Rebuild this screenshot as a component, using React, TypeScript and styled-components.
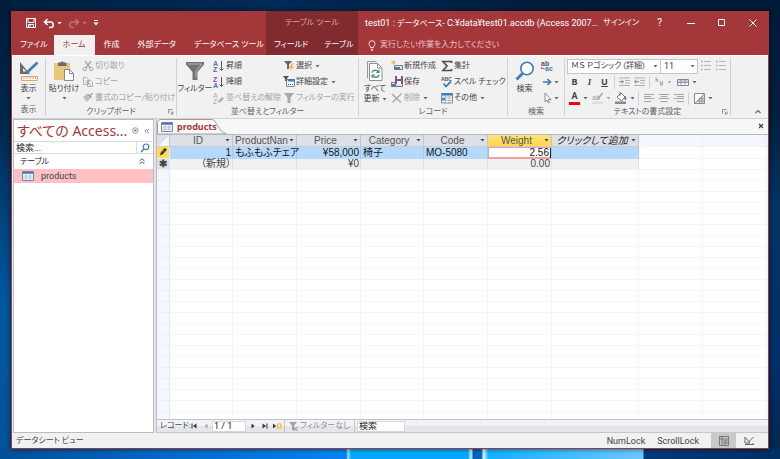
import React, { useState } from "react";
import styled, { createGlobalStyle, css } from "styled-components";

const c = {
  red: "#a4373a",
  redDark: "#812b2e",
  ribbon: "#f1f1f1",
  line: "#d2d2d2",
  text: "#444444",
  muted: "#a3a3a3",
  blue: "#3e7db8",
};

const GlobalStyle = createGlobalStyle`
  *, *::before, *::after { box-sizing: border-box; }
  body {
    margin: 0;
    font-family: Roboto, "Noto Sans CJK JP", sans-serif;
    font-feature-settings: "palt";
    font-size: 8px;
    line-height: 12px;
    color: ${c.text};
  }
  button, input, select {
    font: inherit;
    font-feature-settings: inherit;
    color: inherit;
    margin: 0;
    padding: 0;
    border: 0;
    border-radius: 0;
    background: none;
    outline: none;
  }
`;

const Desktop = styled.div`
  height: 100vh;
  min-height: 300px;
  padding: 11px 11px 10px;
  display: flex;
  background:
    linear-gradient(90deg, #004f97 0, #0069c4 20%, #0085f0 44.400%, #9deaff 44.600%, #00a8fb 45%, #00aaff 60%, #c9f5ff 60.400%, #0064bd 60.700%, #0064bd 61.700%, #dcfaff 62%, #12b2ff 62.600%, #6ac9fb 82.400%, #003b78 82.600%, #002f62 100%) bottom / 100% 11px no-repeat,
    linear-gradient(180deg, #001a38 0, #00203f 25%, #003566 45%, #00306a 80%, #00274f 100%) right / 12px 100% no-repeat,
    linear-gradient(180deg, #001c3c 0, #00284f 28%, #003a6d 40%, #00579f 65%, #00549b 100%) left / 12px 100% no-repeat,
    linear-gradient(90deg, #00203f 0, #002a57 35%, #001b38 75%);
`;

const Window = styled.main`
  flex: 1;
  min-width: 0;
  display: flex;
  flex-direction: column;
  border: 1px solid ${c.red};
  border-top: 0;
  background: ${c.ribbon};
  box-shadow: 0 0 5px rgba(0, 0, 0, 0.6);
`;

/* ---------- header ---------- */

const Header = styled.header`
  display: grid;
  grid-template-columns: 254px 92px minmax(0, 1fr);
  grid-template-rows: 24px 20px;
  background: ${c.red};
  color: #fff;
`;

const QuickAccess = styled.div`
  display: flex;
  align-items: center;
  padding-left: 13px;
  gap: 6px;
`;

const QuickButton = styled.button<{ $dim?: boolean }>`
  display: flex;
  align-items: center;
  gap: 2px;
  opacity: ${(p) => (p.$dim ? 0.3 : 1)};
`;

const ContextTitle = styled.div`
  display: flex;
  align-items: center;
  justify-content: center;
  background: ${c.redDark};
  color: #d9a9aa;
`;

const TitleBar = styled.div`
  display: flex;
  align-items: center;
  padding-left: 7px;
`;

const Title = styled.h1`
  margin: 0;
  flex: 1;
  font-size: 9px;
  font-weight: 400;
  white-space: nowrap;
`;

const TitleNoun = styled.span`
  font-size: 8px;
`;

const SignIn = styled.button`
  padding-right: 5px;
  white-space: nowrap;
`;

const WindowButton = styled.button`
  width: 31px;
  height: 22px;
  display: flex;
  align-items: center;
  justify-content: center;
  font-size: 10px;
`;

const Tab = styled.button<{ $active?: boolean }>`
  height: 20px;
  padding: 0 9px;
  white-space: nowrap;
  ${(p) => p.$active && css`background: ${c.ribbon}; color: ${c.red};`}
`;

const TabRow = styled.nav`
  display: flex;
  ${Tab}:first-child { padding: 0 6px 0 8px; }
`;

const ContextTabRow = styled.nav`
  display: flex;
  justify-content: space-between;
  background: ${c.redDark};
  ${Tab} { padding: 0 8px; }
`;

const TellMe = styled.button`
  display: flex;
  align-items: center;
  gap: 4px;
  padding-left: 10px;
  color: #e9c6c7;
`;

/* ---------- ribbon ---------- */

const Ribbon = styled.section`
  display: flex;
  height: 64px;
  flex: none;
  padding-top: 2px;
  border-top: 1px solid #fff;
  border-bottom: 1px solid ${c.line};
`;

const Group = styled.section<{ $width: number }>`
  width: ${(p) => p.$width}px;
  flex: none;
  display: flex;
  flex-direction: column;
  border-right: 1px solid ${c.line};
  margin-bottom: 2px;
`;

const GroupBody = styled.div`
  height: 48px;
  display: flex;
`;

const GroupLabel = styled.h2`
  margin: 0;
  font-size: 8px;
  font-weight: 400;
  line-height: 12px;
  display: grid;
  grid-template-columns: 8px 1fr 8px;
  align-items: center;
  text-align: center;
  white-space: nowrap;
  color: #5f5f5f;
`;

const BigButton = styled.button<{ $width: number }>`
  width: ${(p) => p.$width}px;
  flex: none;
  display: flex;
  flex-direction: column;
  align-items: center;
  line-height: 10px;
  white-space: nowrap;
`;

const BigIcon = styled.span`
  height: 26px;
  display: flex;
  align-items: center;
`;

const BigText = styled.span`
  display: flex;
  align-items: center;
  gap: 2px;
  height: 10px;
`;

const BigCaret = styled.span`
  height: 8px;
  display: flex;
  align-items: center;
`;

const Column = styled.div<{ $width?: number }>`
  width: ${(p) => (p.$width ? `${p.$width}px` : "auto")};
  flex: none;
  display: grid;
  grid-template-rows: repeat(3, 16px);
`;

const FormatColumn = styled(Column)`
  padding-left: 2px;
`;

const SmallButton = styled.button<{ $dim?: boolean }>`
  display: flex;
  align-items: center;
  gap: 1px;
  white-space: nowrap;
  color: ${(p) => (p.$dim ? c.muted : c.text)};
`;

const WithCaret = styled.span`
  display: flex;
  align-items: center;
  gap: 3px;
`;

const FormatRow = styled.div`
  display: flex;
  align-items: center;
`;

const ComboWrap = styled.label<{ $width: number }>`
  width: ${(p) => p.$width}px;
  height: 15px;
  display: flex;
  align-items: center;
  border: 1px solid #c6c6c6;
  background: #fff;
  padding-right: 2px;
  & + & { border-left: 0; }
`;

const Combo = styled.select<{ $large?: boolean }>`
  flex: 1;
  min-width: 0;
  height: 13px;
  padding-left: 3px;
  appearance: none;
  font-size: ${(p) => (p.$large ? 9 : 8)}px;
`;

const Tool = styled.button<{ $width?: number; $dim?: boolean }>`
  width: ${(p) => p.$width ?? 15}px;
  height: 15px;
  flex: none;
  display: flex;
  align-items: center;
  justify-content: center;
  gap: 3px;
  opacity: ${(p) => (p.$dim ? 0.5 : 1)};
`;

const Divider = styled.span`
  width: 1px;
  height: 13px;
  margin: 0 2px;
  background: ${c.line};
`;

const Glyph = styled.span<{ $kind: "b" | "i" | "u" }>`
  font-family: "Noto Sans", sans-serif;
  font-size: 9px;
  font-weight: 700;
  ${(p) => p.$kind === "i" && css`font-family: "Liberation Serif", serif; font-style: italic;`}
  ${(p) => p.$kind === "u" && css`text-decoration: underline;`}
`;

const Swatch = styled.span`
  width: 11px;
  height: 13px;
  line-height: 9px;
  font-size: 9px;
  font-weight: 700;
  text-align: center;
  border-bottom: 3px solid #f00;
`;

const Collapse = styled.button`
  margin-left: auto;
  align-self: flex-end;
  width: 20px;
  height: 13px;
`;

/* ---------- body ---------- */

const Workspace = styled.div`
  flex: 1;
  min-height: 0;
  display: flex;
  padding-left: 1px;
`;

const NavPane = styled.aside`
  width: 141px;
  flex: none;
  border: 1px solid #b9bcc2;
  background: #fff;
`;

const NavTitle = styled.h2`
  margin: 0;
  height: 21px;
  padding: 0 3px;
  display: flex;
  align-items: center;
  gap: 5px;
  font-family: "Noto Sans", "Noto Sans CJK JP", sans-serif;
  font-size: 14px;
  line-height: 20px;
  font-weight: 400;
  color: ${c.red};
  white-space: nowrap;
`;

const NavTitleText = styled.span`
  flex: 1;
`;

const SearchBox = styled.label`
  height: 13px;
  display: flex;
  align-items: center;
  border-top: 1px solid #d9dbe0;
  border-bottom: 1px solid #d9dbe0;
`;

const SearchInput = styled.input`
  flex: 1;
  min-width: 0;
  height: 11px;
  padding-left: 2px;
  font-size: 9px;
  border-right: 1px solid #d9dbe0;
  &::placeholder { color: #222; opacity: 1; }
`;

const SearchIcon = styled.span`
  width: 16px;
  display: flex;
  justify-content: center;
`;

const NavGroup = styled.button`
  width: 100%;
  height: 15px;
  padding: 0 8px 0 6px;
  display: flex;
  align-items: center;
  justify-content: space-between;
  color: #222;
`;

const NavItem = styled.button`
  width: 100%;
  height: 14px;
  padding-left: 8px;
  display: flex;
  align-items: center;
  gap: 7px;
  background: #ffc1c4;
  font-size: 9px;
`;

const Splitter = styled.div`
  width: 3px;
  flex: none;
  background: #e3e5e9;
  border-right: 1px solid #b9bcc2;
`;

const Document = styled.section`
  flex: 1;
  min-width: 0;
  display: flex;
  flex-direction: column;
  background: #fff;
`;

const DocTabs = styled.div`
  height: 16px;
  flex: none;
  display: flex;
  justify-content: space-between;
  background: #f7f7f8;
  border-bottom: 1px solid #b4b8bf;
`;

const DocTab = styled.button`
  display: grid;
  width: 70px;
  height: 15px;
  color: ${c.red};
  font-family: "Noto Sans", sans-serif;
  font-size: 9px;
  font-weight: 700;
  & > * { grid-area: 1 / 1; }
`;

const DocTabLabel = styled.span`
  display: flex;
  align-items: center;
  gap: 4px;
  padding-left: 4px;
  z-index: 1;
`;

const DocClose = styled.button`
  width: 15px;
`;

const Sheet = styled.div`
  flex: 1;
  min-height: 0;
  overflow: hidden;
`;

const Grid = styled.table`
  width: 100%;
  table-layout: fixed;
  border-collapse: separate;
  border-spacing: 0;
  font-family: "Liberation Sans", "Noto Sans CJK JP", sans-serif;
  font-size: 10px;
  line-height: 10px;
`;

const Col = styled.col<{ $width?: number }>`
  width: ${(p) => (p.$width ? `${p.$width}px` : "auto")};
`;

const HeadCell = styled.th<{ $active?: boolean; $blank?: boolean; $italic?: boolean }>`
  height: 12px;
  padding: 0 2px 0 1px;
  font-weight: 400;
  font-style: ${(p) => (p.$italic ? "italic" : "normal")};
  color: ${(p) => (p.$italic ? "#222" : "#555")};
  background: ${(p) => (p.$active ? "linear-gradient(#ffe27a, #ffd84c)" : p.$blank ? "#f5f7fe" : "#dde0e6")};
  border-right: 1px solid ${(p) => (p.$blank ? "#eef0f8" : "#bfc3ca")};
  border-bottom: 1px solid ${(p) => (p.$blank ? "#f0f2f8" : "#c9ccd2")};
`;

const CornerCell = styled(HeadCell)`
  background: linear-gradient(135deg, #dde0e6 55%, #f6f7f9 55%);
`;

const HeadInner = styled.span`
  display: grid;
  grid-template-columns: minmax(0, 1fr) 5px;
  align-items: center;
  white-space: nowrap;
`;

const HeadText = styled.span`
  text-align: center;
`;

const Marker = styled.th<{ $current?: boolean; $filled?: boolean }>`
  height: 11px;
  padding: 0;
  font-weight: 700;
  line-height: 10px;
  background: ${(p) => (p.$current ? "#ffdc5b" : p.$filled ? "#dde0e6" : "#f5f7fe")};
  border-right: 1px solid #e8eaf0;
  border-bottom: 1px solid #edeff6;
`;

const Cell = styled.td<{ $tone?: "sel" | "new"; $right?: boolean; $edit?: boolean }>`
  height: 11px;
  padding: ${(p) => (p.$right ? "0 1px 0 0" : "0 0 0 2px")};
  white-space: nowrap;
  color: ${(p) => (p.$tone === "sel" ? "#151515" : c.text)};
  text-align: ${(p) => (p.$right ? "right" : "left")};
  border-right: 1px solid #f4f4f4;
  border-bottom: 1px solid #f6f6f6;
  ${(p) => p.$tone === "sel" && css`background: #b4d9fd; border-color: #b4d9fd; border-right-color: #a9c9e8;`}
  ${(p) => p.$tone === "new" && css`background: #f1f1f1; border-color: #f1f1f1; border-right-color: #e3e3e3;`}
  ${(p) => p.$edit && css`background: #fff; padding: 0; box-shadow: inset 0 0 0 1px #f0a0a4; border-bottom-color: #f0a0a4;`}
`;

const EditInput = styled.input`
  display: block;
  width: 100%;
  height: 10px;
  padding-right: 1px;
  text-align: right;
  border-right: 1px solid #222;
`;

/* ---------- record navigator and status bar ---------- */

const RecordBar = styled.div`
  height: 14px;
  flex: none;
  display: flex;
  align-items: center;
  padding-left: 3px;
  border-top: 1px solid #bfc2c8;
  border-bottom: 1px solid #c4c7cc;
  background: linear-gradient(#f1f3f6 50%, #e4e6ea 50%);
`;

const RecordLabel = styled.span`
  width: 28px;
  white-space: nowrap;
`;

const RecordButton = styled.button<{ $dim?: boolean }>`
  width: 12px;
  height: 12px;
  display: flex;
  align-items: center;
  justify-content: center;
  opacity: ${(p) => (p.$dim ? 0.35 : 1)};
`;

const RecordInput = styled.input<{ $width: number }>`
  width: ${(p) => p.$width}px;
  height: 11px;
  padding-left: 1px;
  background: #fff;
  border: 1px solid #d6d8dc;
  color: #222;
  font-size: 9px;
  margin-right: 1px;
  &::placeholder { color: #222; opacity: 1; }
`;

const FilterState = styled.button`
  width: 71px;
  height: 12px;
  display: flex;
  align-items: center;
  justify-content: center;
  gap: 2px;
  margin: 0 2px 0 1px;
  border-left: 1px solid #c4c7cc;
  border-right: 1px solid #c4c7cc;
  color: #8e8e8e;
  white-space: nowrap;
`;

const StatusBar = styled.footer`
  height: 15px;
  flex: none;
  display: flex;
  align-items: center;
  padding: 0 7px 0 4px;
`;

const StatusText = styled.span`
  margin-right: auto;
`;

const KeyState = styled.span`
  margin-right: 12px;
  font-size: 9px;
`;

const ViewButton = styled.button<{ $active?: boolean }>`
  width: 25px;
  height: 15px;
  display: flex;
  align-items: center;
  justify-content: center;
  background: ${(p) => (p.$active ? "#c8c8c8" : "transparent")};
`;

/* ---------- icons ---------- */

type IconProps = { w: number; h: number; children: React.ReactNode };
const Svg = ({ w, h, children }: IconProps) => (
  <svg width={w} height={h} viewBox={`0 0 ${w} ${h}`} fill="none" aria-hidden="true">
    {children}
  </svg>
);

const Caret = ({ color = "#666" }: { color?: string }) => (
  <Svg w={5} h={3}><path d="M0.500 0h4L2.500 2.500z" fill={color} /></Svg>
);

const SaveIcon = () => (
  <Svg w={12} h={12}><path d="M1.500 1.500h9v9h-9zM3 1.500v4h6v-4M3.500 10.500V7.500h5v3M5 8v2" stroke="#fff" /></Svg>
);
const UndoIcon = () => (
  <Svg w={12} h={11}><path d="M4.500 1L1.500 4l3 3M2 4h5.500a2.800 2.800 0 0 1 0 5.600H6" stroke="#fff" strokeWidth="1.500" /></Svg>
);
const RedoIcon = () => (
  <Svg w={12} h={11}><path d="M7.500 1l3 3-3 3M10 4H4.500a2.800 2.800 0 0 0 0 5.600H6" stroke="#fff" strokeWidth="1.500" /></Svg>
);
const CustomizeIcon = () => (
  <Svg w={6} h={6}><path d="M1 .5h4" stroke="#fff" /><path d="M.5 2.500h5L3 5.500z" fill="#fff" /></Svg>
);
const BulbIcon = () => (
  <Svg w={8} h={11}><path d="M2.500 7.500C2.500 6 1 5.500 1 3.700a3 3 0 0 1 6 0C7 5.500 5.500 6 5.500 7.500zM2.700 9.200h2.600M3.200 10.400h1.600" stroke="#f3dcdc" /></Svg>
);
const DesignIcon = () => (
  <Svg w={20} h={21}>
    <path d="M1 1v12h10zM4 7l3.500 3.500H4z" fill="#6b6b6b" fillRule="evenodd" />
    <path d="M18.500 1.500L9 10.500" stroke="#3e7db8" strokeWidth="2.600" />
    <path d="M9.500 9L7 13l3.800-2z" fill="#3e7db8" />
    <path d="M2.500 15.500h16v4h-16z" fill="#fff" stroke="#e9a066" />
    <path d="M5 16v2M8 16v2M11 16v2M14 16v2M16.500 16v2" stroke="#e9a066" />
  </Svg>
);
const PasteIcon = () => (
  <Svg w={20} h={22}>
    <path d="M0 3h16v17H0z" fill="#ebc77c" />
    <path d="M4 2.500h2.500a2 2 0 0 1 3.500 0h2.500V6H4z" fill="#6b6b6b" />
    <path d="M10.500 9.500h5l4 4v7h-9z" fill="#fff" stroke="#8a8a8a" />
    <path d="M15.500 9.500v4h4" stroke="#8a8a8a" />
  </Svg>
);
const CutIcon = () => (
  <Svg w={12} h={12}><path d="M3 1l5 7M9 1L4 8" stroke="#a9a9a9" strokeWidth="1.400" /><circle cx="2.800" cy="9" r="1.700" stroke="#a9a9a9" /><circle cx="9.200" cy="9" r="1.700" stroke="#a9a9a9" /></Svg>
);
const CopyIcon = () => (
  <Svg w={12} h={12}><path d="M1.500 1.500h3l2 2v5h-5zM5.500 4.500h3l2 2v4h-5z" fill="#f5f1f5" stroke="#b3aab3" /><path d="M7 7.500h2M7 9h2M3 4.500h1.500M3 6.500h1.500" stroke="#b3aab3" strokeWidth=".7" /></Svg>
);
const BrushIcon = () => (
  <Svg w={12} h={12}><path d="M1 5l3-2.500 4 4L5 10z" fill="#bdbdbd" /><path d="M4.500 2.500L8.500 6.500 10 5 8.500 4 11 1.500 10 .7 7.500 3 6 1.500z" fill="#9e9e9e" /></Svg>
);
const LauncherIcon = () => (
  <Svg w={6} h={6}><path d="M.5 4.500v-4h4M2.500 2.500l2 2M5 2.500V5H2.500" stroke="#777" strokeWidth=".8" /></Svg>
);
const FunnelIcon = () => (
  <Svg w={20} h={20}><path d="M1 1h18v2.500L12.500 11v8h-5v-8L1 3.500z" fill="#737373" /><path d="M3 3h14L11 10v7" stroke="#c5c5c5" strokeWidth=".8" /></Svg>
);
const SortIcon = ({ top, bottom, flip }: { top: string; bottom: string; flip?: boolean }) => (
  <Svg w={12} h={12}>
    <text x="0" y="5.500" fontSize="7" fontWeight="700" fontFamily="Liberation Sans, sans-serif" fill={flip ? "#8a4aa5" : c.blue}>{top}</text>
    <text x="0" y="11.500" fontSize="7" fontWeight="700" fontFamily="Liberation Sans, sans-serif" fill={flip ? c.blue : "#8a4aa5"}>{bottom}</text>
    <path d="M8.500 1v9.500M6.500 8.500l2 2 2-2" stroke="#555" />
  </Svg>
);
const SortClearIcon = () => (
  <Svg w={12} h={12}>
    <text x="0" y="5.500" fontSize="7" fontFamily="Liberation Sans, sans-serif" fill="#aaa">A</text>
    <text x="0" y="11.500" fontSize="7" fontFamily="Liberation Sans, sans-serif" fill="#aaa">Z</text>
    <path d="M5 9l4-4 2 1.500-3.500 4H5.500z" fill="#b3b3b3" />
  </Svg>
);
const SelectionIcon = () => (
  <Svg w={12} h={12}><path d="M1 1h8L6 4.500V9H4V4.500z" fill="#666" /><path d="M9 3L6 8h2l-1.500 3.500L11 6.500H9L10.500 3z" fill="#f0b45a" /></Svg>
);
const AdvancedIcon = () => (
  <Svg w={12} h={12}><path d="M0 0h6L4 2.500V5H2V2.500z" fill="#555" /><path d="M3.500 3.500h8v7h-8z" fill="#fff" stroke="#888" /><path d="M4 3h8v2.500H5z" fill="#3e7db8" /><path d="M5 8.500h1M7 8.500h1M9 8.500h1" stroke="#555" /></Svg>
);
const ToggleFilterIcon = () => (
  <Svg w={12} h={12}><path d="M1 1h10L7.500 5.500V11h-3V5.500z" fill="#a8a8a8" /></Svg>
);
const RefreshIcon = () => (
  <Svg w={18} h={22}>
    <path d="M1.500 18V1.500h9" stroke="#999" />
    <path d="M3.500 3.500h8l4.500 4.500v12.500H3.500z" fill="#fff" stroke="#8d8d8d" />
    <path d="M11.500 3.500V8H16" stroke="#8d8d8d" />
    <path d="M6 12.500c.7-2.700 4.500-3 6-1M13 15c-.7 2.700-4.500 3-6 1" stroke="#4b9b77" strokeWidth="1.600" />
    <path d="M13.500 9v4H9.700zM5.500 18.500v-4h3.800z" fill="#4b9b77" />
  </Svg>
);
const NewRecordIcon = () => (
  <Svg w={12} h={12}><path d="M3.500 5.500h8v4h-8z" fill="#dce9f5" stroke="#777" /><path d="M4 7h5v2H4z" fill="#3e7db8" /><path d="M2.500 0v5M0 2.500h5M.8.8l3.500 3.500M4.300.8L.8 4.300" stroke="#f0b45a" strokeWidth=".8" /></Svg>
);
const SaveRecordIcon = () => (
  <Svg w={12} h={12}><path d="M.5 6.500h11v4H.5z" fill="#dce9f5" stroke="#777" /><path d="M1 8h4v2H1z" fill="#3e7db8" /><path d="M4 0h8v8H4z" fill="#8a4aa5" /><path d="M6 0h4v3H6zM6 5h4v3H6z" fill="#fff" /></Svg>
);
const DeleteIcon = () => (
  <Svg w={12} h={12}><path d="M1 2l9 8.500M10.500 1.500L1.500 10.500" stroke="#a9a9a9" strokeWidth="1.400" /></Svg>
);
const SigmaIcon = () => (
  <Svg w={12} h={12}><path d="M10.500 3V1.500H2L6 6l-4 4.500h8.500V9" stroke="#505050" strokeWidth="1.700" /></Svg>
);
const SpellIcon = () => (
  <Svg w={12} h={12}><text x="0" y="5" fontSize="5" fontWeight="700" fontFamily="Liberation Sans, sans-serif" fill="#555">ABC</text><path d="M2.500 7.500L5 10.500l5-5" stroke="#3e7db8" strokeWidth="1.800" /></Svg>
);
const MoreIcon = () => (
  <Svg w={12} h={12}><path d="M.5 1.500h11v9.500H.5z" fill="#fff" stroke="#888" /><path d="M1 1h10.500v2.500H1zM1 6h3v2H1z" fill="#3e7db8" /><path d="M.5 4h11M.5 6h11M.5 8.500h11M4.500 4v7M8 4v7" stroke="#8ba7c2" strokeWidth=".7" /></Svg>
);
const FindIcon = () => (
  <Svg w={20} h={20}><circle cx="12" cy="7.500" r="6.200" fill="#fff" stroke="#3e7db8" strokeWidth="1.600" /><path d="M7.500 12.500L1.500 18.500" stroke="#3e7db8" strokeWidth="2.800" /></Svg>
);
const ReplaceIcon = () => (
  <Svg w={12} h={12}>
    <text x="0" y="5.500" fontSize="7" fontWeight="700" fontFamily="Liberation Sans, sans-serif" fill="#555">ab</text>
    <text x="4" y="11" fontSize="7" fontWeight="700" fontFamily="Liberation Sans, sans-serif" fill="#3e7db8">ac</text>
    <path d="M.5 7v1.500h3" stroke="#8a4aa5" />
  </Svg>
);
const GotoIcon = () => (
  <Svg w={12} h={12}><path d="M2 6h7M6.500 3l3 3-3 3" stroke="#3e7db8" strokeWidth="1.700" /></Svg>
);
const PointerIcon = () => (
  <Svg w={12} h={12}><path d="M4 1v9l2-2 1.300 3 1.200-.6L7.300 7.500H10z" fill="#fff" stroke="#777" strokeWidth=".8" /></Svg>
);
const ListIcon = () => (
  <Svg w={11} h={12}><path d="M4 1.500h7M4 5.500h7M4 9.500h7" stroke="#b7b7b7" /><path d="M1 1.500h1.500M1 5.500h1.500M1 9.500h1.500" stroke="#a3a3a3" strokeWidth="1.500" /></Svg>
);
const IndentIcon = ({ back }: { back?: boolean }) => (
  <Svg w={11} h={10}><path d="M0 1h11M6 3.500h5M6 6h5M0 8.500h11" stroke="#b0b0b0" /><path d={back ? "M5 4.700H.5M2.500 3L.5 4.700l2 1.800" : "M0 4.700h4.500M2.500 3l2 1.700-2 1.800"} stroke="#888" /></Svg>
);
const DirectionIcon = () => (
  <Svg w={9} h={10}><path d="M1 0v4M1 2.500h2v1.500H1M4 5h2v3M7.500 4v4H5M5 8l1.500-1.500" stroke="#555" strokeWidth=".9" /></Svg>
);
const GridlinesIcon = () => (
  <Svg w={12} h={9}><path d="M.5 1.500h11v6H.5z" fill="#fff" stroke="#888" /><path d="M1 2h10v2.500H1z" fill="#bcd3e8" /><path d="M.5 4.500h11M4 1.500v6M8 1.500v6" stroke="#888" strokeWidth=".8" /></Svg>
);
const HighlightIcon = () => (
  <Svg w={11} h={12}><text x="0" y="7.500" fontSize="7" fontFamily="Liberation Sans, sans-serif" fill="#444">ab</text><path d="M10.500 1L5.500 7.500" stroke="#666" strokeWidth="1.600" /><path d="M0 9.500h11V12H0z" fill="#d9c6c9" /></Svg>
);
const FillIcon = () => (
  <Svg w={12} h={12}><path d="M2 5l4-4 4 4-3.500 4z" fill="#fff" stroke="#777" /><path d="M5 0v4" stroke="#777" /><path d="M10 3.500c2 2 1.500 4 .5 4.500s-1.500-2-.5-4.500z" fill="#3e7db8" /><path d="M0 9.500h11V12H0z" fill="#8a8a8a" /></Svg>
);
const AlignIcon = ({ kind }: { kind: "l" | "c" | "r" }) => {
  const x = kind === "l" ? 0 : kind === "c" ? 1.5 : 3;
  return (
    <Svg w={10} h={10}><path d={`M0 1.500h10M${x} 3.500h7M0 5.500h10M${x} 8.500h7`} stroke="#a5a5a5" /></Svg>
  );
};
const AlternateIcon = () => (
  <Svg w={11} h={11}><path d="M.5 .5h10v10H.5z" fill="#fff" stroke="#888" /><path d="M10.500.5L.5 10.500h10z" fill="#d5d5d5" stroke="#888" strokeWidth=".8" /><path d="M5.500 5v5.500M3 8h7.500M8 3v7.500M5.500 5.500h5" stroke="#888" strokeWidth=".7" /></Svg>
);
const TableIcon = () => (
  <Svg w={12} h={10}><path d="M.5.5h11v9H.5z" fill="#fff" stroke="#6d86b0" /><path d="M1 1h10v1.800H1z" fill="#4a73b8" /><path d="M.5 5h11M.5 7.200h11M4 2v7.500M8 2v7.500" stroke="#9fb2d0" strokeWidth=".8" /></Svg>
);
const PencilIcon = () => (
  <Svg w={10} h={9}><path d="M2 8.500l1-3.500 3.500-4 2.500 1.500-4 4.500z" fill="#2e270e" /><path d="M4 5.500l2.500-3" stroke="#c98a1c" /></Svg>
);

/* ---------- application ---------- */

const columns: { name: string; width: number; active?: boolean; italic?: boolean }[] = [
  { name: "ID", width: 63 },
  { name: "ProductNan", width: 64 },
  { name: "Price", width: 64 },
  { name: "Category", width: 63 },
  { name: "Code", width: 64 },
  { name: "Weight", width: 64, active: true },
  { name: "クリックして追加", width: 87, italic: true },
];

const emptyRows = Array.from({ length: 60 }, (_, i) => i);

export default function App() {
  const [weight, setWeight] = useState("2.56");
  const [search, setSearch] = useState("");
  return (
    <>
      <GlobalStyle />
      <Desktop>
        <Window>
          <Header>
            <QuickAccess>
              <QuickButton aria-label="上書き保存"><SaveIcon /></QuickButton>
              <QuickButton aria-label="元に戻す"><UndoIcon /><Caret color="#fff" /></QuickButton>
              <QuickButton aria-label="やり直し" $dim><RedoIcon /><Caret color="#fff" /></QuickButton>
              <QuickButton aria-label="カスタマイズ"><CustomizeIcon /></QuickButton>
            </QuickAccess>
            <ContextTitle>テーブル ツール</ContextTitle>
            <TitleBar>
              <Title>test01 : <TitleNoun>データベース</TitleNoun>- C:¥data¥test01.accdb (Access 2007…</Title>
              <SignIn>サインイン</SignIn>
              <WindowButton aria-label="ヘルプ">?</WindowButton>
              <WindowButton aria-label="最小化"><Svg w={8} h={8}><path d="M0 4.500h8" stroke="#fff" /></Svg></WindowButton>
              <WindowButton aria-label="最大化"><Svg w={8} h={8}><path d="M.5.5h6v6h-6z" stroke="#fff" /></Svg></WindowButton>
              <WindowButton aria-label="閉じる"><Svg w={8} h={8}><path d="M.5.5l7 7M7.500.5l-7 7" stroke="#fff" /></Svg></WindowButton>
            </TitleBar>
            <TabRow>
              <Tab>ファイル</Tab>
              <Tab $active>ホーム</Tab>
              <Tab>作成</Tab>
              <Tab>外部データ</Tab>
              <Tab>データベース ツール</Tab>
            </TabRow>
            <ContextTabRow>
              <Tab>フィールド</Tab>
              <Tab>テーブル</Tab>
            </ContextTabRow>
            <TellMe><BulbIcon />実行したい作業を入力してください</TellMe>
          </Header>

          <Ribbon>
            <Group $width={34}>
              <GroupBody>
                <BigButton $width={33}>
                  <BigIcon><DesignIcon /></BigIcon>
                  <BigText>表示</BigText>
                  <BigCaret><Caret /></BigCaret>
                </BigButton>
              </GroupBody>
              <GroupLabel><span /><span>表示</span><span /></GroupLabel>
            </Group>
            <Group $width={131}>
              <GroupBody>
                <BigButton $width={36}>
                  <BigIcon><PasteIcon /></BigIcon>
                  <BigText>貼り付け</BigText>
                  <BigCaret><Caret /></BigCaret>
                </BigButton>
                <Column>
                  <SmallButton $dim><CutIcon />切り取り</SmallButton>
                  <SmallButton $dim><CopyIcon />コピー</SmallButton>
                  <SmallButton $dim><BrushIcon />書式のコピー/貼り付け</SmallButton>
                </Column>
              </GroupBody>
              <GroupLabel><span /><span>クリップボード</span><LauncherIcon /></GroupLabel>
            </Group>
            <Group $width={182}>
              <GroupBody>
                <BigButton $width={36}>
                  <BigIcon><FunnelIcon /></BigIcon>
                  <BigText>フィルター</BigText>
                </BigButton>
                <Column $width={70}>
                  <SmallButton><SortIcon top="A" bottom="Z" />昇順</SmallButton>
                  <SmallButton><SortIcon top="Z" bottom="A" flip />降順</SmallButton>
                  <SmallButton $dim><SortClearIcon />並べ替えの解除</SmallButton>
                </Column>
                <Column>
                  <SmallButton><SelectionIcon /><WithCaret>選択<Caret /></WithCaret></SmallButton>
                  <SmallButton><AdvancedIcon /><WithCaret>詳細設定<Caret /></WithCaret></SmallButton>
                  <SmallButton $dim><ToggleFilterIcon />フィルターの実行</SmallButton>
                </Column>
              </GroupBody>
              <GroupLabel><span /><span>並べ替えとフィルター</span><span /></GroupLabel>
            </Group>
            <Group $width={149}>
              <GroupBody>
                <BigButton $width={32}>
                  <BigIcon><RefreshIcon /></BigIcon>
                  <BigText>すべて</BigText>
                  <BigText>更新<Caret /></BigText>
                </BigButton>
                <Column $width={50}>
                  <SmallButton><NewRecordIcon />新規作成</SmallButton>
                  <SmallButton><SaveRecordIcon />保存</SmallButton>
                  <SmallButton $dim><DeleteIcon /><WithCaret>削除<Caret /></WithCaret></SmallButton>
                </Column>
                <Column>
                  <SmallButton><SigmaIcon />集計</SmallButton>
                  <SmallButton><SpellIcon />スペル チェック</SmallButton>
                  <SmallButton><MoreIcon /><WithCaret>その他<Caret /></WithCaret></SmallButton>
                </Column>
              </GroupBody>
              <GroupLabel><span /><span>レコード</span><span /></GroupLabel>
            </Group>
            <Group $width={57}>
              <GroupBody>
                <BigButton $width={33}>
                  <BigIcon><FindIcon /></BigIcon>
                  <BigText>検索</BigText>
                </BigButton>
                <Column>
                  <SmallButton aria-label="置換"><ReplaceIcon /></SmallButton>
                  <SmallButton aria-label="ジャンプ"><GotoIcon /><Caret /></SmallButton>
                  <SmallButton aria-label="選択"><PointerIcon /><Caret /></SmallButton>
                </Column>
              </GroupBody>
              <GroupLabel><span /><span>検索</span><span /></GroupLabel>
            </Group>
            <Group $width={166}>
              <GroupBody>
                <FormatColumn>
                  <FormatRow>
                    <ComboWrap $width={94}>
                      <Combo aria-label="フォント"><option>ＭＳ Ｐゴシック (詳細)</option></Combo>
                      <Caret />
                    </ComboWrap>
                    <ComboWrap $width={37}>
                      <Combo $large aria-label="フォント サイズ"><option>11</option></Combo>
                      <Caret />
                    </ComboWrap>
                    <Tool aria-label="箇条書き"><ListIcon /></Tool>
                    <Tool aria-label="段落番号"><ListIcon /></Tool>
                  </FormatRow>
                  <FormatRow>
                    <Tool aria-label="太字"><Glyph $kind="b">B</Glyph></Tool>
                    <Tool aria-label="斜体"><Glyph $kind="i">I</Glyph></Tool>
                    <Tool aria-label="下線"><Glyph $kind="u">U</Glyph></Tool>
                    <Divider />
                    <Tool aria-label="インデントを増やす"><IndentIcon /></Tool>
                    <Tool aria-label="インデントを減らす"><IndentIcon back /></Tool>
                    <Divider />
                    <Tool $width={23} $dim aria-label="文字の方向"><DirectionIcon /><Caret /></Tool>
                    <Tool $width={24} aria-label="枠線"><GridlinesIcon /><Caret /></Tool>
                  </FormatRow>
                  <FormatRow>
                    <Tool $width={23} aria-label="フォントの色"><Swatch>A</Swatch><Caret /></Tool>
                    <Tool $width={23} $dim aria-label="蛍光ペン"><HighlightIcon /><Caret /></Tool>
                    <Tool $width={23} aria-label="背景色"><FillIcon /><Caret /></Tool>
                    <Divider />
                    <Tool aria-label="左揃え"><AlignIcon kind="l" /></Tool>
                    <Tool aria-label="中央揃え"><AlignIcon kind="c" /></Tool>
                    <Tool aria-label="右揃え"><AlignIcon kind="r" /></Tool>
                    <Divider />
                    <Tool $width={24} aria-label="交互の行の色"><AlternateIcon /><Caret /></Tool>
                  </FormatRow>
                </FormatColumn>
              </GroupBody>
              <GroupLabel><span /><span>テキストの書式設定</span><LauncherIcon /></GroupLabel>
            </Group>
            <Collapse aria-label="リボンを折りたたむ"><Svg w={6} h={5}><path d="M.5 4L3 1.500 5.500 4" stroke="#666" strokeWidth="1.200" /></Svg></Collapse>
          </Ribbon>

          <Workspace>
            <NavPane>
              <NavTitle>
                <NavTitleText>すべての Access...</NavTitleText>
                <Svg w={9} h={9}><circle cx="4.500" cy="4.500" r="3.800" fill="#eee" stroke="#888" /><path d="M2.500 3.500h4l-2 2.500z" fill="#555" /></Svg>
                <Svg w={8} h={6}><path d="M3.500.5L1 3l2.500 2.500M6.500.5L4 3l2.500 2.500" stroke="#666" /></Svg>
              </NavTitle>
              <SearchBox>
                <SearchInput aria-label="検索" placeholder="検索..." value={search} onChange={(e) => setSearch(e.target.value)} />
                <SearchIcon><Svg w={10} h={10}><circle cx="6" cy="3.800" r="2.800" stroke="#3e7db8" strokeWidth="1.200" /><path d="M4 6L1 9" stroke="#3e7db8" strokeWidth="1.500" /></Svg></SearchIcon>
              </SearchBox>
              <NavGroup>テーブル<Svg w={6} h={7}><path d="M.5 3L3 .8 5.500 3M.5 6L3 3.800 5.500 6" stroke="#555" /></Svg></NavGroup>
              <NavItem><TableIcon />products</NavItem>
            </NavPane>
            <Splitter />
            <Document>
              <DocTabs>
                <DocTab>
                  <Svg w={70} h={15}><path d="M.5 15V3.500Q.5.5 3.500.5H55c5 0 6 13 14 14V15z" fill="#fdfbf8" stroke="#a89c94" /></Svg>
                  <DocTabLabel><TableIcon />products</DocTabLabel>
                </DocTab>
                <DocClose aria-label="products を閉じる"><Svg w={6} h={6}><path d="M1 1l4 4M5 1L1 5" stroke="#444" strokeWidth="1.200" /></Svg></DocClose>
              </DocTabs>
              <Sheet>
                <Grid>
                  <colgroup>
                    <Col $width={13} />
                    {columns.map((col) => <Col key={col.name} $width={col.width} />)}
                    <Col $width={64} />
                    <Col $width={63} />
                    <Col />
                  </colgroup>
                  <thead>
                    <tr>
                      <CornerCell aria-label="すべて選択" />
                      {columns.map((col) => (
                        <HeadCell key={col.name} $active={col.active} $italic={col.italic}>
                          <HeadInner><HeadText>{col.name}</HeadText><Caret color="#444" /></HeadInner>
                        </HeadCell>
                      ))}
                      <HeadCell $blank /><HeadCell $blank /><HeadCell $blank />
                    </tr>
                  </thead>
                  <tbody>
                    <tr>
                      <Marker $current aria-label="編集中"><PencilIcon /></Marker>
                      <Cell $tone="sel" $right>1</Cell>
                      <Cell $tone="sel">もふもふチェア</Cell>
                      <Cell $tone="sel" $right>¥58,000</Cell>
                      <Cell $tone="sel">椅子</Cell>
                      <Cell $tone="sel">MO-5080</Cell>
                      <Cell $tone="sel" $edit>
                        <EditInput aria-label="Weight" value={weight} onChange={(e) => setWeight(e.target.value)} />
                      </Cell>
                      <Cell $tone="sel" />
                      <Cell /><Cell /><Cell />
                    </tr>
                    <tr>
                      <Marker $filled>✱</Marker>
                      <Cell $tone="new" $right>（新規）</Cell>
                      <Cell $tone="new" />
                      <Cell $tone="new" $right>¥0</Cell>
                      <Cell $tone="new" />
                      <Cell $tone="new" />
                      <Cell $tone="new" $right>0.00</Cell>
                      <Cell $tone="new" />
                      <Cell /><Cell /><Cell />
                    </tr>
                    {emptyRows.map((r) => (
                      <tr key={r}>
                        <Marker />
                        <Cell /><Cell /><Cell /><Cell /><Cell /><Cell /><Cell /><Cell /><Cell /><Cell />
                      </tr>
                    ))}
                  </tbody>
                </Grid>
              </Sheet>
              <RecordBar>
                <RecordLabel>レコード:</RecordLabel>
                <RecordButton aria-label="先頭レコード"><Svg w={6} h={6}><path d="M1 .5v5" stroke="#333" /><path d="M5.500.5v5L2 3z" fill="#333" /></Svg></RecordButton>
                <RecordButton aria-label="前のレコード" $dim><Svg w={6} h={6}><path d="M4.500.5v5L1.500 3z" fill="#333" /></Svg></RecordButton>
                <RecordInput $width={34} aria-label="カレント レコード" defaultValue="1 / 1" />
                <RecordButton aria-label="次のレコード"><Svg w={6} h={6}><path d="M1.500.5v5L4.500 3z" fill="#333" /></Svg></RecordButton>
                <RecordButton aria-label="最終レコード"><Svg w={6} h={6}><path d="M5 .5v5" stroke="#333" /><path d="M.5.5v5L4 3z" fill="#333" /></Svg></RecordButton>
                <RecordButton aria-label="新しいレコード"><Svg w={9} h={6}><path d="M0 .5v5L3 3z" fill="#333" /><path d="M4.500 1h3.500v4H4.500z" stroke="#f2b91d" strokeWidth="1.200" /></Svg></RecordButton>
                <FilterState><Svg w={9} h={9}><path d="M0 0h8L5 3.500V8H3V3.500z" fill="#a0a0a0" /><path d="M4.500 5l4 4M8.500 5l-4 4" stroke="#888" /></Svg>フィルターなし</FilterState>
                <RecordInput $width={48} aria-label="レコードの検索" placeholder="検索" />
              </RecordBar>
            </Document>
          </Workspace>

          <StatusBar>
            <StatusText>データシート ビュー</StatusText>
            <KeyState>NumLock</KeyState>
            <KeyState>ScrollLock</KeyState>
            <ViewButton $active aria-label="データシート ビュー"><Svg w={10} h={10}><path d="M.5.5h9v9h-9zM.5 3h9M3 .5v9M4.500 4.800h4M4.500 6.300h4M4.500 7.800h4" stroke="#666" strokeWidth=".8" /></Svg></ViewButton>
            <ViewButton aria-label="デザイン ビュー"><Svg w={10} h={10}><path d="M1 1v6h5zM9.500 1L4.500 6M1 8.500h8.500M9 7v2" stroke="#666" /></Svg></ViewButton>
          </StatusBar>
        </Window>
      </Desktop>
    </>
  );
}
